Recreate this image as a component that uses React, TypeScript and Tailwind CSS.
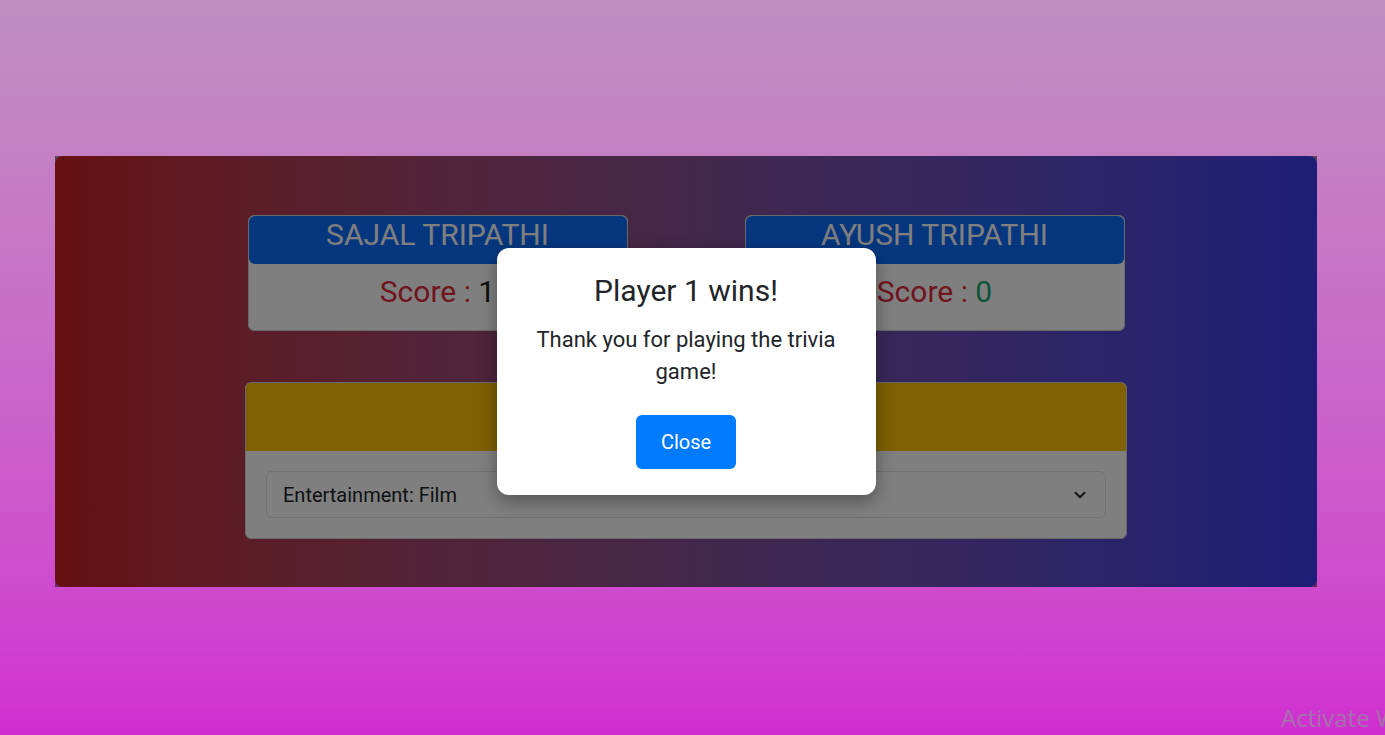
import { ChevronDown } from "lucide-react";

const players = [
  { name: "SAJAL TRIPATHI", score: 1, scoreColor: "text-[#1a1a1a]" },
  { name: "AYUSH TRIPATHI", score: 0, scoreColor: "text-[#1aa878]" },
];

export default function App() {
  return (
    <div
      className="relative min-h-screen overflow-hidden bg-gradient-to-b from-[#bf8fbf] to-[#d02ed0] pt-[156px] pl-[55px]"
      style={{ fontFamily: "Roboto, 'Noto Sans', sans-serif" }}
    >
      {/* Game board with modal backdrop */}
      <div className="relative w-[1262px] h-[431px]">
        <div className="h-full rounded-lg bg-gradient-to-r from-[#cc2020] to-[#3c3cf0] flex flex-col items-center pt-[59px]">
          <div className="flex gap-[117px]">
            {players.map((p) => (
              <div key={p.name} className="w-[380px] rounded-md border border-[#d0d0d0] bg-white">
                <div className="h-[48px] rounded-md bg-[#0d6efd] pt-[1px] text-center text-[30px] leading-[1.2] text-white">
                  {p.name}
                </div>
                <div className="h-[66px] pt-[10px] text-center text-[30px] leading-[1.2]">
                  <span className="text-[#e02a3c]">Score : </span>
                  <span className={p.scoreColor}>{p.score}</span>
                </div>
              </div>
            ))}
          </div>

          {/* Category picker */}
          <div className="mt-[51px] w-[882px] rounded-md border border-[#d0d0d0] bg-white overflow-hidden">
            <div className="h-[68px] bg-[#ffc107]" />
            <div className="px-[20px] pt-[20px] pb-[20px]">
              <div className="flex h-[47px] items-center justify-between rounded-md border border-[#dee2e6] pl-[16px] pr-[16px] text-[20px] text-[#212529]">
                <span>Entertainment: Film</span>
                <ChevronDown size={18} strokeWidth={2.5} />
              </div>
            </div>
          </div>
        </div>

        <div className="absolute inset-0 bg-black/50" />

        {/* Modal */}
        <div className="absolute inset-0 flex items-center justify-center">
          <div className="w-[379px] h-[247px] rounded-xl bg-white px-[24px] pt-[25px] text-center text-[#212529] shadow-[0_6px_18px_rgba(0,0,0,0.35)]">
            <h2 className="text-[30px] leading-[1.2]">Player 1 wins!</h2>
            <p className="mt-[15px] text-[22px] leading-[32px]">Thank you for playing the trivia game!</p>
            <button className="mt-[27px] h-[54px] w-[100px] rounded-md bg-[#007bff] text-[20px] text-white">
              Close
            </button>
          </div>
        </div>
      </div>

      <div className="absolute left-[1281px] top-[700px] whitespace-nowrap text-[24px] text-[#a472ac]" style={{ fontFamily: "'Open Sans', sans-serif" }}>
        Activate Windows
      </div>
    </div>
  );
}
